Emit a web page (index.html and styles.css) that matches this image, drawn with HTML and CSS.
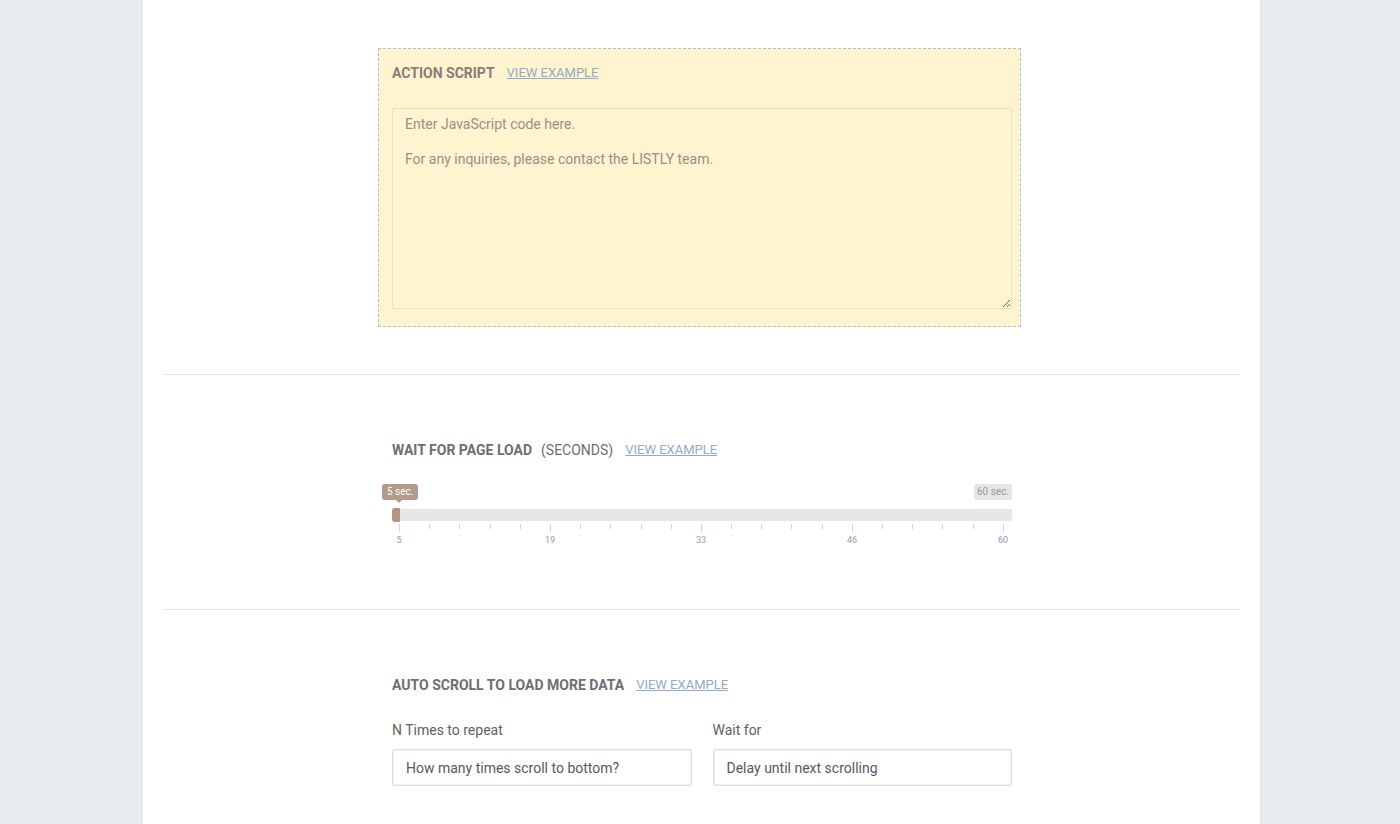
FILE: index.html
```html
<!DOCTYPE html>
<html lang="en">
<head>
<meta charset="utf-8">
<title>Listly settings</title>
<link rel="stylesheet" href="styles.css">
</head>
<body>
<div class="card">
  <section class="section section-script">
    <div class="col">
      <div class="script-box">
        <div class="heading heading-script">
          <span class="heading-title">ACTION SCRIPT</span>
          <a class="link" href="#">VIEW EXAMPLE</a>
        </div>
        <textarea class="script-area" placeholder="Enter JavaScript code here.&#10;&#10;For any inquiries, please contact the LISTLY team."></textarea>
      </div>
    </div>
  </section>
  <hr class="divider">
  <section class="section section-wait">
    <div class="col">
      <div class="heading">
        <span class="heading-title">WAIT FOR PAGE LOAD</span>
        <span class="heading-sub">(SECONDS)</span>
        <a class="link" href="#">VIEW EXAMPLE</a>
      </div>
      <div class="slider">
        <div class="tips">
          <span class="tip tip-min">5 sec.</span>
          <span class="tip tip-max">60 sec.</span>
        </div>
        <div class="track"><span class="handle"></span><span class="track-dots"></span></div>
        <div class="ticks">
          <i class="tick major"></i><i class="tick"></i><i class="tick"></i><i class="tick"></i><i class="tick"></i>
          <i class="tick major"></i><i class="tick"></i><i class="tick"></i><i class="tick"></i><i class="tick"></i>
          <i class="tick major"></i><i class="tick"></i><i class="tick"></i><i class="tick"></i><i class="tick"></i>
          <i class="tick major"></i><i class="tick"></i><i class="tick"></i><i class="tick"></i><i class="tick"></i>
          <i class="tick major"></i>
        </div>
        <div class="scale">
          <span>5</span><span>19</span><span>33</span><span>46</span><span>60</span>
        </div>
      </div>
    </div>
  </section>
  <hr class="divider">
  <section class="section section-scroll">
    <div class="col">
      <div class="heading">
        <span class="heading-title">AUTO SCROLL TO LOAD MORE DATA</span>
        <a class="link" href="#">VIEW EXAMPLE</a>
      </div>
      <div class="fields">
        <label class="field">
          <span class="field-label">N Times to repeat</span>
          <input class="field-input" type="text" placeholder="How many times scroll to bottom?">
        </label>
        <label class="field">
          <span class="field-label">Wait for</span>
          <input class="field-input" type="text" placeholder="Delay until next scrolling">
        </label>
      </div>
    </div>
  </section>
</div>
</body>
</html>
```

FILE: styles.css
```css
* { box-sizing: border-box; }

html, body {
  margin: 0;
  padding: 0;
  background: #e9ecef;
  font-family: Roboto, "Liberation Sans", Arial, sans-serif;
  color: #666;
}

.card {
  width: 1117px;
  margin-left: 143px;
  min-height: 824px;
  background: #fff;
  padding: 0 20px 0 21px;
  box-shadow: 0 0 3px rgba(0, 0, 0, 0.06);
  overflow: hidden;
}

.col {
  width: 620px;
  margin: 0 auto;
}

.divider {
  border: 0;
  border-top: 1px solid #e3e4e6;
  margin: 0;
  height: 0;
}

.section-script { padding: 48px 0 47px; }
.section-wait { padding: 65px 0 63px; }
.section-scroll { padding: 65px 0 40px; }

.heading {
  display: flex;
  align-items: center;
  height: 20px;
  line-height: 20px;
  white-space: nowrap;
}

.heading-title {
  font-size: 14px;
  font-weight: 700;
  color: #6e6e6e;
}

.heading-sub {
  font-size: 14px;
  color: #6e6e6e;
  margin-left: 9px;
}

.link {
  font-size: 13px;
  color: #93a9c6;
  text-decoration: underline;
  margin-left: 12px;
}

/* action script */
.script-box {
  width: 643px;
  margin-left: -14px;
  background: #fef4d0;
  border: 1px dashed #b3bfcc;
  padding: 14px 8px 17px 13px;
}

.heading-script .heading-title { color: #8d7b78; }

.script-area {
  display: block;
  width: 620px;
  height: 201px;
  margin-top: 25px;
  background: transparent;
  border: 1px dotted #c9cdd2;
  border-radius: 2px;
  padding: 7px 12px;
  font-family: Roboto, "Liberation Sans", Arial, sans-serif;
  font-size: 14px;
  line-height: 17.5px;
  color: #8d7b78;
  resize: vertical;
  outline: none;
}

.script-area::placeholder { color: #9e8d84; opacity: 1; }

/* slider */
.slider { margin-top: 24px; }

.tips {
  display: flex;
  justify-content: space-between;
  height: 16px;
}

.tip {
  position: relative;
  height: 16px;
  line-height: 16px;
  font-size: 10px;
  padding: 0 5px;
  border-radius: 3px;
}

.tip-min {
  margin-left: -10px;
  background: #b49a8c;
  color: #fff;
}

.tip-min::after {
  content: "";
  position: absolute;
  left: 14px;
  bottom: -3px;
  border-left: 3px solid transparent;
  border-right: 3px solid transparent;
  border-top: 3px solid #b49a8c;
}

.tip-max {
  background: #e6e6e8;
  color: #9a9a9a;
  padding: 0 3px;
}

.track {
  position: relative;
  margin-top: 9px;
  height: 12px;
  background: #e6e7ea;
}

.track-dots {
  position: absolute;
  left: 14px;
  right: 6px;
  top: 6px;
  border-top: 1px dotted #e0dcc8;
}

.handle {
  position: absolute;
  left: 0;
  top: -1px;
  width: 8px;
  height: 14px;
  background: #b49585;
  border-radius: 3px 1px 1px 3px;
}

.ticks {
  display: flex;
  justify-content: space-between;
  align-items: flex-start;
  margin-left: 7px;
  width: 605px;
  height: 13px;
  padding-top: 3px;
}

.tick {
  display: block;
  width: 1px;
  height: 5px;
  background: #cdd2d8;
}

.tick.major { height: 8px; }

.scale {
  display: flex;
  justify-content: space-between;
  margin-left: -8px;
  width: 634px;
  font-size: 9px;
  line-height: 12px;
  color: #8fa0b8;
}

.scale span {
  width: 30px;
  text-align: center;
}

/* fields */
.fields {
  display: grid;
  grid-template-columns: 1fr 1fr;
  column-gap: 21px;
  margin-top: 25px;
}

.field { display: block; }

.field-label {
  display: block;
  font-size: 14px;
  line-height: 20px;
  color: #616161;
}

.field-input {
  display: block;
  width: 100%;
  height: 37px;
  margin-top: 9px;
  border: 1px solid #dcdfe3;
  box-shadow: inset 0 0 0 1px #eef0f2;
  border-radius: 2px;
  padding: 0 13px;
  font-family: Roboto, "Liberation Sans", Arial, sans-serif;
  font-size: 14px;
  color: #555;
  outline: none;
  background: #fff;
}

.field-input::placeholder { color: #585858; opacity: 1; }
```
